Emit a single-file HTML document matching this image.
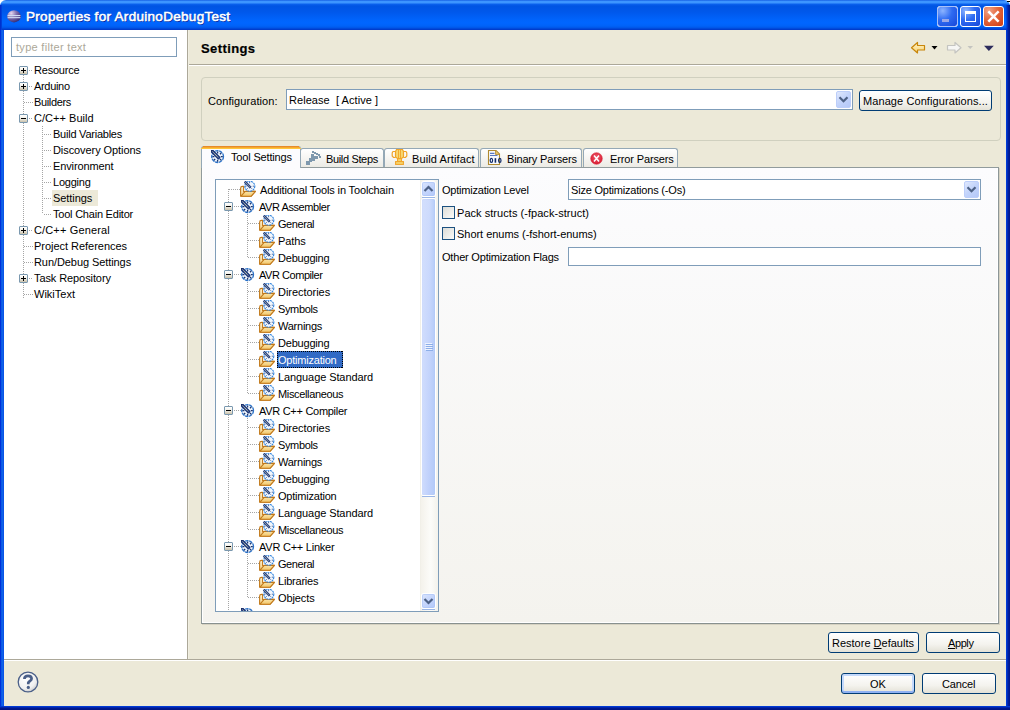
<!DOCTYPE html>
<html><head><meta charset="utf-8"><style>
html,body{margin:0;padding:0;width:1010px;height:710px;overflow:hidden;background:#fff;}
body{position:relative;font-family:"Liberation Sans", sans-serif;}
.t{position:absolute;white-space:nowrap;line-height:13px;font-family:"Liberation Sans", sans-serif;}
</style></head><body>
<svg width="0" height="0" style="position:absolute">
<defs>
<symbol id="dial" viewBox="0 0 14 14">
  <circle cx="6.6" cy="6.6" r="5.9" fill="#f0f6fd" stroke="#2b72c8" stroke-width="1.3" stroke-dasharray="3.4 0.7"/>
  <g stroke="#1a3570" stroke-width="1.3">
    <path d="M6.6 1.4 V3.4 M6.6 9.8 V11.8 M1.4 6.6 H3.4 M9.8 6.6 H11.8 M2.9 10.3 L4.2 9 M10.3 2.9 L9 4.2 M10.3 10.3 L9 9"/>
  </g>
  <path d="M0.3 1.9 L1.9 0.3 L8.8 7.4 L8 8.6 L7.2 8.8 Z" fill="#3a5088" stroke="#17337a" stroke-width="1.2"/>
  <path d="M1.6 1.6 L7.4 7.6" stroke="#f8f0b0" stroke-width="1" stroke-dasharray="1 0.7"/>
  <rect x="0" y="0" width="1.4" height="1.4" fill="#1a2a60"/>
</symbol>
<symbol id="minidial" viewBox="0 0 12 11">
  <circle cx="5.8" cy="5.2" r="5" fill="#f2f7fd" stroke="#2e82dc" stroke-width="1.1" stroke-dasharray="2 0.7"/>
  <g stroke="#1f3c7a" stroke-width="0.9"><path d="M5.6 1.2 V2.2 M1.4 5.2 H2.4 M8.8 5.2 H9.8 M3 8 L3.6 7.4 M8.2 8 L7.6 7.4"/></g>
  <path d="M0.2 1.5 L1.5 0.2 L7 5.8 L6.4 6.8 L5.8 7 Z" fill="#3a5088" stroke="#17337a" stroke-width="1"/>
  <path d="M1.3 1.3 L5.9 6.1" stroke="#f8f0b0" stroke-width="0.8" stroke-dasharray="0.8 0.7"/>
</symbol>
<symbol id="folder" viewBox="0 0 16 16">
  <defs><linearGradient id="fb" x1="0" y1="0" x2="0" y2="1"><stop offset="0" stop-color="#fdf3d6"/><stop offset="1" stop-color="#f4cf80"/></linearGradient>
  <linearGradient id="ff" x1="0" y1="0" x2="0" y2="1"><stop offset="0" stop-color="#fbe4a8"/><stop offset="1" stop-color="#f2c668"/></linearGradient></defs>
  <path d="M0.6 15 L0.6 7.2 Q0.6 5.4 2.6 5.4 L3.6 5.4 L3.6 10.6 L15.4 10.4 L11.2 15.2 L1 15.2 Z" fill="url(#fb)" stroke="#c27a1c" stroke-width="1.1" stroke-linejoin="round"/>
  <path d="M1 15.2 L5.2 10.4 L15.4 10.4 L11.2 15.2 Z" fill="url(#ff)" stroke="#c27a1c" stroke-width="1.1" stroke-linejoin="round"/>
  <svg x="4" y="0" width="12" height="11"><use href="#minidial"/></svg>
</symbol>
</defs></svg>
<div style="position:absolute;left:0px;top:0px;width:1010px;height:30px;border-radius:6px 6px 0 0;background:linear-gradient(to bottom,#0a4fdc 0px,#3d95ff 1px,#3d95ff 3px,#0b62ee 4px,#0054e3 6px,#0058eb 12px,#0064fc 20px,#0066ff 23px,#0062f8 26px,#0055e5 28px,#003fd2 29px,#0039c6 30px)"></div>
<div style="position:absolute;left:0px;top:5px;width:2px;height:25px;background:linear-gradient(to right,#0028c8,#0048e0)"></div>
<div style="position:absolute;left:1006px;top:5px;width:4px;height:25px;background:linear-gradient(to right,rgba(0,60,220,0.3) 0,rgba(0,40,190,0.7) 1px,#0028b0 2px,#001a90 3px)"></div>
<div style="position:absolute;left:0px;top:30px;width:4px;height:680px;background:linear-gradient(to right,#001ccf 0,#0044e6 1px,#166ee6 2px,#0a55e8 3px)"></div>
<div style="position:absolute;left:1006px;top:30px;width:4px;height:680px;background:linear-gradient(to right,#0042e0 0,#0032c8 1px,#0024a8 2px,#001890 3px)"></div>
<div style="position:absolute;left:0px;top:706px;width:1010px;height:4px;background:linear-gradient(to bottom,#0043ea 0,#0030c0 1px,#001a99 2px,#001585 3px)"></div>
<div style="position:absolute;left:4px;top:30px;width:1002px;height:676px;background:#ece9d8"></div>
<svg style="position:absolute;left:7px;top:10px" width="14" height="13" viewBox="0 0 14 13">
<defs><radialGradient id="eg" cx="0.3" cy="0.25" r="0.85"><stop offset="0" stop-color="#e8d8f0"/><stop offset="0.45" stop-color="#8070b0"/><stop offset="1" stop-color="#2c2470"/></radialGradient></defs>
<ellipse cx="7" cy="6.3" rx="6.8" ry="6.1" fill="url(#eg)"/>
<rect x="0.6" y="5" width="12.8" height="1.1" fill="#d0dcf4"/><rect x="0.6" y="7.1" width="12.8" height="1.1" fill="#d0dcf4"/>
</svg>
<div class="t" style="left:26px;top:9px;font-size:13.5px;line-height:16px;letter-spacing:0.3px;color:#fff;font-weight:normal;-webkit-text-stroke:0.55px #fff;text-shadow:1px 1px 0 #0a2a9a;">Properties for ArduinoDebugTest</div>
<div style="position:absolute;left:937px;top:6px;width:21px;height:21px;box-sizing:border-box;border:1px solid #fff;border-radius:3px;background:radial-gradient(circle at 25% 20%,#8cb4ff 0,#2e6bf2 45%,#1746d8 100%)"></div>
<div style="position:absolute;left:960px;top:6px;width:21px;height:21px;box-sizing:border-box;border:1px solid #fff;border-radius:3px;background:radial-gradient(circle at 25% 20%,#8cb4ff 0,#2e6bf2 45%,#1746d8 100%)"></div>
<div style="position:absolute;left:983px;top:6px;width:21px;height:21px;box-sizing:border-box;border:1px solid #fff;border-radius:3px;background:radial-gradient(circle at 25% 20%,#f1a488 0,#e4673c 45%,#cf3b12 100%)"></div>
<div style="position:absolute;left:937px;top:6px;width:21px;height:21px;box-sizing:border-box;border:1px solid #a8c0f8;border-radius:3px"></div>
<div style="position:absolute;left:1007px;top:1px;width:3px;height:1px;background:#000"></div>
<div style="position:absolute;left:942px;top:19px;width:7px;height:3px;background:#9aa8e6"></div>
<div style="position:absolute;left:965px;top:11px;width:11px;height:11px;box-sizing:border-box;border:1px solid #fff;border-top-width:3px"></div>
<svg style="position:absolute;left:983px;top:6px" width="21" height="21"><path d="M6.2 6.2 L14.8 14.8 M14.8 6.2 L6.2 14.8" stroke="#fff" stroke-width="2.5" stroke-linecap="square"/></svg>
<div style="position:absolute;left:4px;top:30px;width:183px;height:629px;background:#fff"></div>
<div style="position:absolute;left:187px;top:30px;width:1px;height:629px;background:#aca899"></div>
<div style="position:absolute;left:188px;top:30px;width:1px;height:629px;background:#f1efe2"></div>
<div style="position:absolute;left:11px;top:37px;width:166px;height:20px;box-sizing:border-box;border:1px solid #7f9db9;background:#fff"></div>
<div class="t" style="left:16px;top:41px;font-size:11px;letter-spacing:0.3px;color:#aca899;font-weight:normal;">type filter text</div>
<div style="position:absolute;left:23px;top:75px;width:1px;height:223px;background:repeating-linear-gradient(to bottom,#a5a5a5 0 1px,transparent 1px 2px)"></div>
<div style="position:absolute;left:42px;top:126px;width:1px;height:88px;background:repeating-linear-gradient(to bottom,#a5a5a5 0 1px,transparent 1px 2px)"></div>
<div style="position:absolute;left:29px;top:70px;width:4px;height:1px;background:repeating-linear-gradient(to right,#a5a5a5 0 1px,transparent 1px 2px)"></div>
<div class="t" style="left:34px;top:64px;font-size:11px;letter-spacing:-0.214px;color:#000;font-weight:normal;">Resource</div>
<div style="position:absolute;left:29px;top:86px;width:4px;height:1px;background:repeating-linear-gradient(to right,#a5a5a5 0 1px,transparent 1px 2px)"></div>
<div class="t" style="left:34px;top:80px;font-size:11px;letter-spacing:-0.317px;color:#000;font-weight:normal;">Arduino</div>
<div style="position:absolute;left:24px;top:102px;width:9px;height:1px;background:repeating-linear-gradient(to right,#a5a5a5 0 1px,transparent 1px 2px)"></div>
<div class="t" style="left:34px;top:96px;font-size:11px;letter-spacing:-0.343px;color:#000;font-weight:normal;">Builders</div>
<div style="position:absolute;left:29px;top:118px;width:4px;height:1px;background:repeating-linear-gradient(to right,#a5a5a5 0 1px,transparent 1px 2px)"></div>
<div class="t" style="left:34px;top:112px;font-size:11px;letter-spacing:0.04px;color:#000;font-weight:normal;">C/C++ Build</div>
<div style="position:absolute;left:44px;top:134px;width:8px;height:1px;background:repeating-linear-gradient(to right,#a5a5a5 0 1px,transparent 1px 2px)"></div>
<div class="t" style="left:53px;top:128px;font-size:11px;letter-spacing:-0.236px;color:#000;font-weight:normal;">Build Variables</div>
<div style="position:absolute;left:44px;top:150px;width:8px;height:1px;background:repeating-linear-gradient(to right,#a5a5a5 0 1px,transparent 1px 2px)"></div>
<div class="t" style="left:53px;top:144px;font-size:11px;letter-spacing:-0.081px;color:#000;font-weight:normal;">Discovery Options</div>
<div style="position:absolute;left:44px;top:166px;width:8px;height:1px;background:repeating-linear-gradient(to right,#a5a5a5 0 1px,transparent 1px 2px)"></div>
<div class="t" style="left:53px;top:160px;font-size:11px;letter-spacing:-0.12px;color:#000;font-weight:normal;">Environment</div>
<div style="position:absolute;left:44px;top:182px;width:8px;height:1px;background:repeating-linear-gradient(to right,#a5a5a5 0 1px,transparent 1px 2px)"></div>
<div class="t" style="left:53px;top:176px;font-size:11px;letter-spacing:-0.233px;color:#000;font-weight:normal;">Logging</div>
<div style="position:absolute;left:44px;top:198px;width:8px;height:1px;background:repeating-linear-gradient(to right,#a5a5a5 0 1px,transparent 1px 2px)"></div>
<div style="position:absolute;left:52px;top:190px;width:46px;height:16px;background:#ece9d8"></div>
<div class="t" style="left:53px;top:192px;font-size:11px;letter-spacing:-0.071px;color:#000;font-weight:normal;">Settings</div>
<div style="position:absolute;left:44px;top:214px;width:8px;height:1px;background:repeating-linear-gradient(to right,#a5a5a5 0 1px,transparent 1px 2px)"></div>
<div class="t" style="left:53px;top:208px;font-size:11px;letter-spacing:-0.219px;color:#000;font-weight:normal;">Tool Chain Editor</div>
<div style="position:absolute;left:29px;top:230px;width:4px;height:1px;background:repeating-linear-gradient(to right,#a5a5a5 0 1px,transparent 1px 2px)"></div>
<div class="t" style="left:34px;top:224px;font-size:11px;letter-spacing:0.142px;color:#000;font-weight:normal;">C/C++ General</div>
<div style="position:absolute;left:24px;top:246px;width:9px;height:1px;background:repeating-linear-gradient(to right,#a5a5a5 0 1px,transparent 1px 2px)"></div>
<div class="t" style="left:34px;top:240px;font-size:11px;letter-spacing:-0.029px;color:#000;font-weight:normal;">Project References</div>
<div style="position:absolute;left:24px;top:262px;width:9px;height:1px;background:repeating-linear-gradient(to right,#a5a5a5 0 1px,transparent 1px 2px)"></div>
<div class="t" style="left:34px;top:256px;font-size:11px;letter-spacing:-0.076px;color:#000;font-weight:normal;">Run/Debug Settings</div>
<div style="position:absolute;left:29px;top:278px;width:4px;height:1px;background:repeating-linear-gradient(to right,#a5a5a5 0 1px,transparent 1px 2px)"></div>
<div class="t" style="left:34px;top:272px;font-size:11px;letter-spacing:-0.093px;color:#000;font-weight:normal;">Task Repository</div>
<div style="position:absolute;left:24px;top:294px;width:9px;height:1px;background:repeating-linear-gradient(to right,#a5a5a5 0 1px,transparent 1px 2px)"></div>
<div class="t" style="left:34px;top:288px;font-size:11px;letter-spacing:-0.0px;color:#000;font-weight:normal;">WikiText</div>
<div style="position:absolute;left:19px;top:66px;width:9px;height:9px;box-sizing:border-box;border:1px solid #7a98af;border-radius:1px;background:linear-gradient(#fff 0%,#f3f1ea 45%,#c9c1ab 100%)"></div>
<div style="position:absolute;left:21px;top:70px;width:5px;height:1px;background:#000"></div>
<div style="position:absolute;left:23px;top:68px;width:1px;height:5px;background:#000"></div>
<div style="position:absolute;left:19px;top:82px;width:9px;height:9px;box-sizing:border-box;border:1px solid #7a98af;border-radius:1px;background:linear-gradient(#fff 0%,#f3f1ea 45%,#c9c1ab 100%)"></div>
<div style="position:absolute;left:21px;top:86px;width:5px;height:1px;background:#000"></div>
<div style="position:absolute;left:23px;top:84px;width:1px;height:5px;background:#000"></div>
<div style="position:absolute;left:19px;top:114px;width:9px;height:9px;box-sizing:border-box;border:1px solid #7a98af;border-radius:1px;background:linear-gradient(#fff 0%,#f3f1ea 45%,#c9c1ab 100%)"></div>
<div style="position:absolute;left:21px;top:118px;width:5px;height:1px;background:#000"></div>
<div style="position:absolute;left:19px;top:226px;width:9px;height:9px;box-sizing:border-box;border:1px solid #7a98af;border-radius:1px;background:linear-gradient(#fff 0%,#f3f1ea 45%,#c9c1ab 100%)"></div>
<div style="position:absolute;left:21px;top:230px;width:5px;height:1px;background:#000"></div>
<div style="position:absolute;left:23px;top:228px;width:1px;height:5px;background:#000"></div>
<div style="position:absolute;left:19px;top:274px;width:9px;height:9px;box-sizing:border-box;border:1px solid #7a98af;border-radius:1px;background:linear-gradient(#fff 0%,#f3f1ea 45%,#c9c1ab 100%)"></div>
<div style="position:absolute;left:21px;top:278px;width:5px;height:1px;background:#000"></div>
<div style="position:absolute;left:23px;top:276px;width:1px;height:5px;background:#000"></div>
<div class="t" style="left:201px;top:42px;font-size:13px;letter-spacing:0.4px;color:#000;font-weight:bold;-webkit-text-stroke:0.2px #000;">Settings</div>
<div style="position:absolute;left:189px;top:64px;width:817px;height:1px;background:#aca899"></div>
<div style="position:absolute;left:189px;top:65px;width:817px;height:1px;background:#fff"></div>
<svg style="position:absolute;left:909px;top:41px" width="90" height="14" viewBox="0 0 90 14">
<defs><linearGradient id="ag" x1="0" y1="0" x2="0" y2="1"><stop offset="0" stop-color="#fff6cc"/><stop offset="1" stop-color="#f8d070"/></linearGradient></defs>
<path d="M2.5 6.8 L8.5 1.5 L8.5 4.5 L15.5 4.5 L15.5 9 L8.5 9 L8.5 12 Z" fill="url(#ag)" stroke="#c8860a" stroke-width="1.2" stroke-linejoin="round"/>
<path d="M22.5 5 L28.5 5 L25.5 8.5 Z" fill="#000"/>
<path d="M52 6.8 L46 1.5 L46 4.5 L38.5 4.5 L38.5 9 L46 9 L46 12 Z" fill="#f6f6f4" stroke="#c4c4c0" stroke-width="1.2" stroke-linejoin="round"/>
<path d="M58.5 5 L64 5 L61.2 8 Z" fill="#c4c4c0"/>
<path d="M75 4.8 L84.8 4.8 L79.9 10 Z" fill="#2c2c5c"/>
</svg>
<div style="position:absolute;left:201px;top:77px;width:800px;height:64px;box-sizing:border-box;border:1px solid #d0d0bf;border-radius:4px"></div>
<div class="t" style="left:208px;top:95px;font-size:11px;letter-spacing:0.077px;color:#000;font-weight:normal;">Configuration:</div>
<div style="position:absolute;left:286px;top:89px;width:567px;height:21px;box-sizing:border-box;border:1px solid #7f9db9;background:#fff"></div>
<div class="t" style="left:289px;top:94px;font-size:11px;letter-spacing:0.056px;color:#000;font-weight:normal;">Release&nbsp; [ Active ]</div>
<div style="position:absolute;left:836px;top:91px;width:15px;height:17px;box-sizing:border-box;border:1px solid #bccefa;border-radius:2px;background:linear-gradient(135deg,#e0e8fd,#c2d3fb 50%,#b4c8f8)"></div>
<svg style="position:absolute;left:836px;top:91px" width="15" height="17"><path d="M3.5 6.3 L7.5 10.3 L11.5 6.3" stroke="#4d6185" stroke-width="2.2" fill="none"/></svg>
<div style="position:absolute;left:859px;top:90px;width:133px;height:21px;box-sizing:border-box;border:1px solid #003c74;border-radius:3px;background:linear-gradient(#ffffff 0%,#f4f3ee 60%,#e3e1d6 100%);"></div>
<div class="t" style="left:863px;top:95px;font-size:11px;letter-spacing:0.087px;color:#000;font-weight:normal;">Manage Configurations...</div>
<div style="position:absolute;left:201px;top:167px;width:798px;height:457px;box-sizing:border-box;border:1px solid #919b9c;border-right-color:#8c9698;border-bottom-color:#88918f;background:linear-gradient(#fcfcfe,#f4f3ee);box-shadow:inset -1px -1px 0 #fff, inset 1px 0 0 #fff, 1px 1px 0 #d6d2c2"></div>
<div style="position:absolute;left:300px;top:148px;width:84px;height:19px;box-sizing:border-box;border:1px solid #94a8b6;border-bottom:none;border-radius:3px 3px 0 0;background:linear-gradient(#fff,#ecebe5)"></div>
<div class="t" style="left:326px;top:153px;font-size:11px;letter-spacing:-0.35px;color:#000;font-weight:normal;">Build Steps</div>
<div style="position:absolute;left:384px;top:148px;width:95px;height:19px;box-sizing:border-box;border:1px solid #94a8b6;border-bottom:none;border-radius:3px 3px 0 0;background:linear-gradient(#fff,#ecebe5)"></div>
<div class="t" style="left:412px;top:153px;font-size:11px;letter-spacing:0.115px;color:#000;font-weight:normal;">Build Artifact</div>
<div style="position:absolute;left:480px;top:148px;width:102px;height:19px;box-sizing:border-box;border:1px solid #94a8b6;border-bottom:none;border-radius:3px 3px 0 0;background:linear-gradient(#fff,#ecebe5)"></div>
<div class="t" style="left:507px;top:153px;font-size:11px;letter-spacing:-0.169px;color:#000;font-weight:normal;">Binary Parsers</div>
<div style="position:absolute;left:583px;top:148px;width:95px;height:19px;box-sizing:border-box;border:1px solid #94a8b6;border-bottom:none;border-radius:3px 3px 0 0;background:linear-gradient(#fff,#ecebe5)"></div>
<div class="t" style="left:610px;top:153px;font-size:11px;letter-spacing:-0.133px;color:#000;font-weight:normal;">Error Parsers</div>
<div style="position:absolute;left:201px;top:146px;width:100px;height:22px;box-sizing:border-box;border:1px solid #94a8b6;border-bottom:none;border-radius:3px 3px 0 0;background:#fcfcfe"></div>
<div style="position:absolute;left:203px;top:146px;width:96px;height:1px;background:#e68b2c"></div>
<div style="position:absolute;left:202px;top:147px;width:98px;height:1px;background:#f5a830"></div>
<div style="position:absolute;left:201px;top:148px;width:100px;height:1px;background:#ffc73c"></div>
<div class="t" style="left:231px;top:151px;font-size:11px;letter-spacing:-0.167px;color:#000;font-weight:normal;">Tool Settings</div>
<svg style="position:absolute;left:211px;top:150px" width="14" height="14"><use href="#dial"/></svg>
<svg style="position:absolute;left:302px;top:148px" width="24" height="20" viewBox="0 0 24 20" shape-rendering="crispEdges" fill="#7e98ad">
<rect x="10" y="3" width="2" height="2"/><rect x="12" y="4" width="2" height="2"/><rect x="14" y="5" width="2" height="2"/><rect x="16" y="6" width="2" height="2"/><rect x="17" y="8" width="2" height="2"/>
<rect x="9" y="6" width="3" height="2"/><rect x="9" y="8" width="7" height="3"/><rect x="7" y="10" width="6" height="3"/><rect x="7" y="12" width="3" height="2"/>
<rect x="4" y="13" width="4" height="4"/>
</svg>
<svg style="position:absolute;left:391px;top:148px" width="17" height="17" viewBox="0 0 17 17">
<path d="M4.5 3.5 L5.5 1.5 L11.5 1.5 L12.5 3.5 L12.5 9 L10.5 10.5 L6.5 10.5 L4.5 9 Z" fill="#f7d870" stroke="#f0a428" stroke-width="1.2"/>
<path d="M4.5 3.5 L2 3.5 L1.2 5 L1.2 8 L2.5 9.5 L4.5 9.5 M12.5 3.5 L15 3.5 L15.8 5 L15.8 8 L14.5 9.5 L12.5 9.5" fill="none" stroke="#f0a428" stroke-width="1.2"/>
<path d="M7.5 2 L7.5 10 M9.5 2 L9.5 10" stroke="#f0a428" stroke-width="0.9"/>
<rect x="6.6" y="10.6" width="3.8" height="3" fill="#f7d870" stroke="#f0a428" stroke-width="1.1"/>
<rect x="4.6" y="13.6" width="7.8" height="2.8" fill="#f7d870" stroke="#f0a428" stroke-width="1.1"/>
</svg>
<svg style="position:absolute;left:487px;top:150px" width="16" height="16" viewBox="0 0 16 16">
<path d="M1.5 0.5 L9 0.5 L12.5 4 L12.5 14.5 L1.5 14.5 Z" fill="#f6f8fc" stroke="#b08a30" stroke-width="1.1"/>
<path d="M8.5 0.8 L8.5 4.5 L12.2 4.5" fill="#e8c060" stroke="#b08a30" stroke-width="0.8"/>
<path d="M3 3.4 H7.5 M3 5.5 H10.5" stroke="#5a78c0" stroke-width="1.1"/>
<g fill="none" stroke="#0f2a68" stroke-width="1.3"><ellipse cx="4.4" cy="10.4" rx="1.2" ry="2" stroke-width="1.2"/><ellipse cx="12.8" cy="10.4" rx="1.2" ry="2" stroke-width="1.2"/></g><rect x="7.6" y="8.2" width="1.6" height="4.5" fill="#0f2a68"/>
</svg>
<svg style="position:absolute;left:590px;top:152px" width="13" height="13" viewBox="0 0 13 13">
<defs><radialGradient id="rg" cx="0.5" cy="0.4" r="0.6"><stop offset="0" stop-color="#f06070"/><stop offset="1" stop-color="#d81830"/></radialGradient></defs>
<circle cx="6.5" cy="6.5" r="5.8" fill="url(#rg)" stroke="#d82838" stroke-width="0.6"/>
<path d="M4 3.6 L9 9.4 M9 3.6 L4 9.4" stroke="#fff" stroke-width="1.5"/>
</svg>
<div style="position:absolute;left:215px;top:179px;width:224px;height:433px;box-sizing:border-box;border:1px solid #7f9db9;background:#fff"></div>
<div style="position:absolute;left:216px;top:180px;width:204px;height:431px;overflow:hidden"><div style="position:absolute;left:-216px;top:-180px;width:1010px;height:710px">
<div style="position:absolute;left:228px;top:189px;width:1px;height:451px;background:repeating-linear-gradient(to bottom,#a5a5a5 0 1px,transparent 1px 2px)"></div>
<div style="position:absolute;left:229px;top:189px;width:12px;height:1px;background:repeating-linear-gradient(to right,#a5a5a5 0 1px,transparent 1px 2px)"></div>
<div style="position:absolute;left:234px;top:206px;width:7px;height:1px;background:repeating-linear-gradient(to right,#a5a5a5 0 1px,transparent 1px 2px)"></div>
<div style="position:absolute;left:248px;top:223px;width:11px;height:1px;background:repeating-linear-gradient(to right,#a5a5a5 0 1px,transparent 1px 2px)"></div>
<div style="position:absolute;left:248px;top:240px;width:11px;height:1px;background:repeating-linear-gradient(to right,#a5a5a5 0 1px,transparent 1px 2px)"></div>
<div style="position:absolute;left:248px;top:257px;width:11px;height:1px;background:repeating-linear-gradient(to right,#a5a5a5 0 1px,transparent 1px 2px)"></div>
<div style="position:absolute;left:234px;top:274px;width:7px;height:1px;background:repeating-linear-gradient(to right,#a5a5a5 0 1px,transparent 1px 2px)"></div>
<div style="position:absolute;left:248px;top:291px;width:11px;height:1px;background:repeating-linear-gradient(to right,#a5a5a5 0 1px,transparent 1px 2px)"></div>
<div style="position:absolute;left:248px;top:308px;width:11px;height:1px;background:repeating-linear-gradient(to right,#a5a5a5 0 1px,transparent 1px 2px)"></div>
<div style="position:absolute;left:248px;top:325px;width:11px;height:1px;background:repeating-linear-gradient(to right,#a5a5a5 0 1px,transparent 1px 2px)"></div>
<div style="position:absolute;left:248px;top:342px;width:11px;height:1px;background:repeating-linear-gradient(to right,#a5a5a5 0 1px,transparent 1px 2px)"></div>
<div style="position:absolute;left:248px;top:359px;width:11px;height:1px;background:repeating-linear-gradient(to right,#a5a5a5 0 1px,transparent 1px 2px)"></div>
<div style="position:absolute;left:248px;top:376px;width:11px;height:1px;background:repeating-linear-gradient(to right,#a5a5a5 0 1px,transparent 1px 2px)"></div>
<div style="position:absolute;left:248px;top:393px;width:11px;height:1px;background:repeating-linear-gradient(to right,#a5a5a5 0 1px,transparent 1px 2px)"></div>
<div style="position:absolute;left:234px;top:410px;width:7px;height:1px;background:repeating-linear-gradient(to right,#a5a5a5 0 1px,transparent 1px 2px)"></div>
<div style="position:absolute;left:248px;top:427px;width:11px;height:1px;background:repeating-linear-gradient(to right,#a5a5a5 0 1px,transparent 1px 2px)"></div>
<div style="position:absolute;left:248px;top:444px;width:11px;height:1px;background:repeating-linear-gradient(to right,#a5a5a5 0 1px,transparent 1px 2px)"></div>
<div style="position:absolute;left:248px;top:461px;width:11px;height:1px;background:repeating-linear-gradient(to right,#a5a5a5 0 1px,transparent 1px 2px)"></div>
<div style="position:absolute;left:248px;top:478px;width:11px;height:1px;background:repeating-linear-gradient(to right,#a5a5a5 0 1px,transparent 1px 2px)"></div>
<div style="position:absolute;left:248px;top:495px;width:11px;height:1px;background:repeating-linear-gradient(to right,#a5a5a5 0 1px,transparent 1px 2px)"></div>
<div style="position:absolute;left:248px;top:512px;width:11px;height:1px;background:repeating-linear-gradient(to right,#a5a5a5 0 1px,transparent 1px 2px)"></div>
<div style="position:absolute;left:248px;top:529px;width:11px;height:1px;background:repeating-linear-gradient(to right,#a5a5a5 0 1px,transparent 1px 2px)"></div>
<div style="position:absolute;left:234px;top:546px;width:7px;height:1px;background:repeating-linear-gradient(to right,#a5a5a5 0 1px,transparent 1px 2px)"></div>
<div style="position:absolute;left:248px;top:563px;width:11px;height:1px;background:repeating-linear-gradient(to right,#a5a5a5 0 1px,transparent 1px 2px)"></div>
<div style="position:absolute;left:248px;top:580px;width:11px;height:1px;background:repeating-linear-gradient(to right,#a5a5a5 0 1px,transparent 1px 2px)"></div>
<div style="position:absolute;left:248px;top:597px;width:11px;height:1px;background:repeating-linear-gradient(to right,#a5a5a5 0 1px,transparent 1px 2px)"></div>
<div style="position:absolute;left:229px;top:614px;width:12px;height:1px;background:repeating-linear-gradient(to right,#a5a5a5 0 1px,transparent 1px 2px)"></div>
<div style="position:absolute;left:247px;top:214px;width:1px;height:44px;background:repeating-linear-gradient(to bottom,#a5a5a5 0 1px,transparent 1px 2px)"></div>
<div style="position:absolute;left:247px;top:282px;width:1px;height:112px;background:repeating-linear-gradient(to bottom,#a5a5a5 0 1px,transparent 1px 2px)"></div>
<div style="position:absolute;left:247px;top:418px;width:1px;height:112px;background:repeating-linear-gradient(to bottom,#a5a5a5 0 1px,transparent 1px 2px)"></div>
<div style="position:absolute;left:247px;top:554px;width:1px;height:44px;background:repeating-linear-gradient(to bottom,#a5a5a5 0 1px,transparent 1px 2px)"></div>
<div class="t" style="left:260px;top:184px;font-size:11px;letter-spacing:-0.136px;color:#000;font-weight:normal;">Additional Tools in Toolchain</div>
<svg style="position:absolute;left:240px;top:181px" width="16" height="16"><use href="#folder"/></svg>
<div class="t" style="left:259px;top:201px;font-size:11px;letter-spacing:-0.425px;color:#000;font-weight:normal;">AVR Assembler</div>
<div style="position:absolute;left:224px;top:202px;width:9px;height:9px;box-sizing:border-box;border:1px solid #7a98af;border-radius:1px;background:linear-gradient(#fff 0%,#f3f1ea 45%,#c9c1ab 100%)"></div>
<div style="position:absolute;left:226px;top:206px;width:5px;height:1px;background:#000"></div>
<svg style="position:absolute;left:241px;top:200px" width="14" height="14"><use href="#dial"/></svg>
<div class="t" style="left:278px;top:218px;font-size:11px;letter-spacing:-0.433px;color:#000;font-weight:normal;">General</div>
<svg style="position:absolute;left:259px;top:215px" width="16" height="16"><use href="#folder"/></svg>
<div class="t" style="left:278px;top:235px;font-size:11px;letter-spacing:-0.125px;color:#000;font-weight:normal;">Paths</div>
<svg style="position:absolute;left:259px;top:232px" width="16" height="16"><use href="#folder"/></svg>
<div class="t" style="left:278px;top:252px;font-size:11px;letter-spacing:-0.2px;color:#000;font-weight:normal;">Debugging</div>
<svg style="position:absolute;left:259px;top:249px" width="16" height="16"><use href="#folder"/></svg>
<div class="t" style="left:259px;top:269px;font-size:11px;letter-spacing:-0.45px;color:#000;font-weight:normal;">AVR Compiler</div>
<div style="position:absolute;left:224px;top:270px;width:9px;height:9px;box-sizing:border-box;border:1px solid #7a98af;border-radius:1px;background:linear-gradient(#fff 0%,#f3f1ea 45%,#c9c1ab 100%)"></div>
<div style="position:absolute;left:226px;top:274px;width:5px;height:1px;background:#000"></div>
<svg style="position:absolute;left:241px;top:268px" width="14" height="14"><use href="#dial"/></svg>
<div class="t" style="left:278px;top:286px;font-size:11px;letter-spacing:-0.04px;color:#000;font-weight:normal;">Directories</div>
<svg style="position:absolute;left:259px;top:283px" width="16" height="16"><use href="#folder"/></svg>
<div class="t" style="left:278px;top:303px;font-size:11px;letter-spacing:-0.367px;color:#000;font-weight:normal;">Symbols</div>
<svg style="position:absolute;left:259px;top:300px" width="16" height="16"><use href="#folder"/></svg>
<div class="t" style="left:278px;top:320px;font-size:11px;letter-spacing:-0.243px;color:#000;font-weight:normal;">Warnings</div>
<svg style="position:absolute;left:259px;top:317px" width="16" height="16"><use href="#folder"/></svg>
<div class="t" style="left:278px;top:337px;font-size:11px;letter-spacing:-0.2px;color:#000;font-weight:normal;">Debugging</div>
<svg style="position:absolute;left:259px;top:334px" width="16" height="16"><use href="#folder"/></svg>
<div style="position:absolute;left:277px;top:351px;width:66px;height:17px;background:#316ac5"></div>
<div style="position:absolute;left:277px;top:351px;width:66px;height:1px;background:repeating-linear-gradient(to right,#000 0 1px,transparent 1px 2px)"></div>
<div style="position:absolute;left:277px;top:367px;width:66px;height:1px;background:repeating-linear-gradient(to right,#000 0 1px,transparent 1px 2px)"></div>
<div style="position:absolute;left:277px;top:351px;width:1px;height:17px;background:repeating-linear-gradient(to bottom,#000 0 1px,transparent 1px 2px)"></div>
<div style="position:absolute;left:342px;top:351px;width:1px;height:17px;background:repeating-linear-gradient(to bottom,#000 0 1px,transparent 1px 2px)"></div>
<div class="t" style="left:278px;top:354px;font-size:11px;letter-spacing:-0.218px;color:#fff;font-weight:normal;">Optimization</div>
<svg style="position:absolute;left:259px;top:351px" width="16" height="16"><use href="#folder"/></svg>
<div class="t" style="left:278px;top:371px;font-size:11px;letter-spacing:-0.094px;color:#000;font-weight:normal;">Language Standard</div>
<svg style="position:absolute;left:259px;top:368px" width="16" height="16"><use href="#folder"/></svg>
<div class="t" style="left:278px;top:388px;font-size:11px;letter-spacing:-0.35px;color:#000;font-weight:normal;">Miscellaneous</div>
<svg style="position:absolute;left:259px;top:385px" width="16" height="16"><use href="#folder"/></svg>
<div class="t" style="left:259px;top:405px;font-size:11px;letter-spacing:-0.287px;color:#000;font-weight:normal;">AVR C++ Compiler</div>
<div style="position:absolute;left:224px;top:406px;width:9px;height:9px;box-sizing:border-box;border:1px solid #7a98af;border-radius:1px;background:linear-gradient(#fff 0%,#f3f1ea 45%,#c9c1ab 100%)"></div>
<div style="position:absolute;left:226px;top:410px;width:5px;height:1px;background:#000"></div>
<svg style="position:absolute;left:241px;top:404px" width="14" height="14"><use href="#dial"/></svg>
<div class="t" style="left:278px;top:422px;font-size:11px;letter-spacing:-0.04px;color:#000;font-weight:normal;">Directories</div>
<svg style="position:absolute;left:259px;top:419px" width="16" height="16"><use href="#folder"/></svg>
<div class="t" style="left:278px;top:439px;font-size:11px;letter-spacing:-0.367px;color:#000;font-weight:normal;">Symbols</div>
<svg style="position:absolute;left:259px;top:436px" width="16" height="16"><use href="#folder"/></svg>
<div class="t" style="left:278px;top:456px;font-size:11px;letter-spacing:-0.243px;color:#000;font-weight:normal;">Warnings</div>
<svg style="position:absolute;left:259px;top:453px" width="16" height="16"><use href="#folder"/></svg>
<div class="t" style="left:278px;top:473px;font-size:11px;letter-spacing:-0.2px;color:#000;font-weight:normal;">Debugging</div>
<svg style="position:absolute;left:259px;top:470px" width="16" height="16"><use href="#folder"/></svg>
<div class="t" style="left:278px;top:490px;font-size:11px;letter-spacing:-0.218px;color:#000;font-weight:normal;">Optimization</div>
<svg style="position:absolute;left:259px;top:487px" width="16" height="16"><use href="#folder"/></svg>
<div class="t" style="left:278px;top:507px;font-size:11px;letter-spacing:-0.094px;color:#000;font-weight:normal;">Language Standard</div>
<svg style="position:absolute;left:259px;top:504px" width="16" height="16"><use href="#folder"/></svg>
<div class="t" style="left:278px;top:524px;font-size:11px;letter-spacing:-0.35px;color:#000;font-weight:normal;">Miscellaneous</div>
<svg style="position:absolute;left:259px;top:521px" width="16" height="16"><use href="#folder"/></svg>
<div class="t" style="left:259px;top:541px;font-size:11px;letter-spacing:-0.231px;color:#000;font-weight:normal;">AVR C++ Linker</div>
<div style="position:absolute;left:224px;top:542px;width:9px;height:9px;box-sizing:border-box;border:1px solid #7a98af;border-radius:1px;background:linear-gradient(#fff 0%,#f3f1ea 45%,#c9c1ab 100%)"></div>
<div style="position:absolute;left:226px;top:546px;width:5px;height:1px;background:#000"></div>
<svg style="position:absolute;left:241px;top:540px" width="14" height="14"><use href="#dial"/></svg>
<div class="t" style="left:278px;top:558px;font-size:11px;letter-spacing:-0.433px;color:#000;font-weight:normal;">General</div>
<svg style="position:absolute;left:259px;top:555px" width="16" height="16"><use href="#folder"/></svg>
<div class="t" style="left:278px;top:575px;font-size:11px;letter-spacing:-0.212px;color:#000;font-weight:normal;">Libraries</div>
<svg style="position:absolute;left:259px;top:572px" width="16" height="16"><use href="#folder"/></svg>
<div class="t" style="left:278px;top:592px;font-size:11px;letter-spacing:-0.1px;color:#000;font-weight:normal;">Objects</div>
<svg style="position:absolute;left:259px;top:589px" width="16" height="16"><use href="#folder"/></svg>
<div class="t" style="left:259px;top:609px;font-size:11px;letter-spacing:-0.2px;color:#000;font-weight:normal;">AVR Archiver</div>
<svg style="position:absolute;left:241px;top:608px" width="14" height="14"><use href="#dial"/></svg>
</div></div>
<div style="position:absolute;left:420px;top:180px;width:18px;height:431px;background:linear-gradient(to right,#eeede5 0,#f4f2eb 1px,#fcfcf9 60%,#f3f2ec 100%)"></div>
<div style="position:absolute;left:421px;top:181px;width:15px;height:16px;border-radius:3px;background:#fff"></div>
<div style="position:absolute;left:422px;top:182px;width:13px;height:14px;border-radius:2px;background:linear-gradient(135deg,#dce6fd 0%,#c4d5fc 50%,#b3c8f9 100%);box-shadow:inset 0 0 0 1px rgba(170,195,245,0.6)"></div>
<div style="position:absolute;left:422px;top:197px;width:13px;height:1px;background:#9bb6e6"></div>
<svg style="position:absolute;left:422px;top:182px" width="13" height="14"><path d="M2.5 9 L6.5 5 L10.5 9" stroke="#4d6185" stroke-width="2.2" fill="none"/></svg>
<div style="position:absolute;left:421px;top:593px;width:15px;height:16px;border-radius:3px;background:#fff"></div>
<div style="position:absolute;left:422px;top:594px;width:13px;height:14px;border-radius:2px;background:linear-gradient(135deg,#dce6fd 0%,#c4d5fc 50%,#b3c8f9 100%);box-shadow:inset 0 0 0 1px rgba(170,195,245,0.6)"></div>
<div style="position:absolute;left:422px;top:609px;width:13px;height:1px;background:#9bb6e6"></div>
<svg style="position:absolute;left:422px;top:594px" width="13" height="14"><path d="M2.5 5 L6.5 9 L10.5 5" stroke="#4d6185" stroke-width="2.2" fill="none"/></svg>
<div style="position:absolute;left:421px;top:198px;width:15px;height:298px;border-radius:3px;background:#fff"></div>
<div style="position:absolute;left:422px;top:199px;width:13px;height:296px;border-radius:2px;background:linear-gradient(135deg,#dce6fd 0%,#c4d5fc 50%,#b3c8f9 100%);box-shadow:inset 0 0 0 1px rgba(170,195,245,0.6)"></div>
<div style="position:absolute;left:422px;top:496px;width:13px;height:1px;background:#9bb6e6"></div>
<div style="position:absolute;left:422px;top:199px;width:13px;height:296px;border-radius:2px;background:linear-gradient(to right,rgba(210,222,253,0.9),rgba(198,213,252,0.6) 55%,rgba(178,202,248,0.9))"></div>
<div style="position:absolute;left:425px;top:343px;width:7px;height:1px;background:#eef3fe"></div>
<div style="position:absolute;left:426px;top:344px;width:7px;height:1px;background:#8caee8"></div>
<div style="position:absolute;left:425px;top:345px;width:7px;height:1px;background:#eef3fe"></div>
<div style="position:absolute;left:426px;top:346px;width:7px;height:1px;background:#8caee8"></div>
<div style="position:absolute;left:425px;top:347px;width:7px;height:1px;background:#eef3fe"></div>
<div style="position:absolute;left:426px;top:348px;width:7px;height:1px;background:#8caee8"></div>
<div style="position:absolute;left:425px;top:349px;width:7px;height:1px;background:#eef3fe"></div>
<div style="position:absolute;left:426px;top:350px;width:7px;height:1px;background:#8caee8"></div>
<div class="t" style="left:442px;top:184px;font-size:11px;letter-spacing:-0.212px;color:#000;font-weight:normal;">Optimization Level</div>
<div style="position:absolute;left:568px;top:179px;width:413px;height:21px;box-sizing:border-box;border:1px solid #7f9db9;background:#fff"></div>
<div class="t" style="left:571px;top:184px;font-size:11px;letter-spacing:-0.2px;color:#000;font-weight:normal;">Size Optimizations (-Os)</div>
<div style="position:absolute;left:964px;top:181px;width:15px;height:17px;box-sizing:border-box;border:1px solid #bccefa;border-radius:2px;background:linear-gradient(135deg,#e0e8fd,#c2d3fb 50%,#b4c8f8)"></div>
<svg style="position:absolute;left:964px;top:181px" width="15" height="17"><path d="M3.5 6.3 L7.5 10.3 L11.5 6.3" stroke="#4d6185" stroke-width="2.2" fill="none"/></svg>
<div style="position:absolute;left:442px;top:206px;width:13px;height:13px;box-sizing:border-box;border:1px solid #1c5180;background:linear-gradient(135deg,#dcdcd7,#fbfbf9)"></div>
<div class="t" style="left:457px;top:207px;font-size:11px;letter-spacing:0.044px;color:#000;font-weight:normal;">Pack structs (-fpack-struct)</div>
<div style="position:absolute;left:442px;top:227px;width:13px;height:13px;box-sizing:border-box;border:1px solid #1c5180;background:linear-gradient(135deg,#dcdcd7,#fbfbf9)"></div>
<div class="t" style="left:457px;top:228px;font-size:11px;letter-spacing:-0.035px;color:#000;font-weight:normal;">Short enums (-fshort-enums)</div>
<div class="t" style="left:442px;top:251px;font-size:11px;letter-spacing:-0.2px;color:#000;font-weight:normal;">Other Optimization Flags</div>
<div style="position:absolute;left:568px;top:247px;width:413px;height:19px;box-sizing:border-box;border:1px solid #7f9db9;background:#fff"></div>
<div style="position:absolute;left:828px;top:632px;width:91px;height:21px;box-sizing:border-box;border:1px solid #003c74;border-radius:3px;background:linear-gradient(#ffffff 0%,#f4f3ee 60%,#e3e1d6 100%);"></div>
<div class="t" style="left:832px;top:637px;font-size:11px;letter-spacing:0.0px;color:#000;font-weight:normal;">Restore <u>D</u>efaults</div>
<div style="position:absolute;left:926px;top:632px;width:74px;height:21px;box-sizing:border-box;border:1px solid #003c74;border-radius:3px;background:linear-gradient(#ffffff 0%,#f4f3ee 60%,#e3e1d6 100%);"></div>
<div class="t" style="left:948px;top:637px;font-size:11px;letter-spacing:-0.4px;color:#000;font-weight:normal;"><u>A</u>pply</div>
<div style="position:absolute;left:4px;top:659px;width:1002px;height:1px;background:#aca899"></div>
<div style="position:absolute;left:4px;top:660px;width:1002px;height:1px;background:#fff"></div>
<div style="position:absolute;left:841px;top:673px;width:74px;height:21px;box-sizing:border-box;border:1px solid #003c74;border-radius:3px;background:linear-gradient(#ffffff 0%,#f4f3ee 60%,#e3e1d6 100%);box-shadow:inset 0 -2px 0 0 #8fb1f2, inset 0 0 0 2px #c4d9fb;"></div>
<div class="t" style="left:870px;top:678px;font-size:11px;letter-spacing:0.0px;color:#000;font-weight:normal;">OK</div>
<div style="position:absolute;left:922px;top:673px;width:74px;height:21px;box-sizing:border-box;border:1px solid #003c74;border-radius:3px;background:linear-gradient(#ffffff 0%,#f4f3ee 60%,#e3e1d6 100%);"></div>
<div class="t" style="left:942px;top:678px;font-size:11px;letter-spacing:-0.18px;color:#000;font-weight:normal;">Cancel</div>
<svg style="position:absolute;left:17px;top:671px" width="22" height="22" viewBox="0 0 22 22">
<defs><radialGradient id="hg" cx="0.4" cy="0.35" r="0.7"><stop offset="0" stop-color="#ffffff"/><stop offset="0.7" stop-color="#f0f0f0"/><stop offset="1" stop-color="#c8c8c8"/></radialGradient></defs>
<circle cx="11" cy="11" r="9.8" fill="url(#hg)" stroke="#4a5f88" stroke-width="1.3"/>
<path d="M7.4 8 C7.4 5.6 9.2 4.8 11 4.8 C13.2 4.8 14.6 6 14.6 7.8 C14.6 9.8 12 10.2 11.3 11.8 L11.3 13.2" stroke="#4a5f88" stroke-width="2.7" fill="none"/>
<circle cx="11.3" cy="16.4" r="1.6" fill="#4a5f88"/>
</svg>
</body></html>
